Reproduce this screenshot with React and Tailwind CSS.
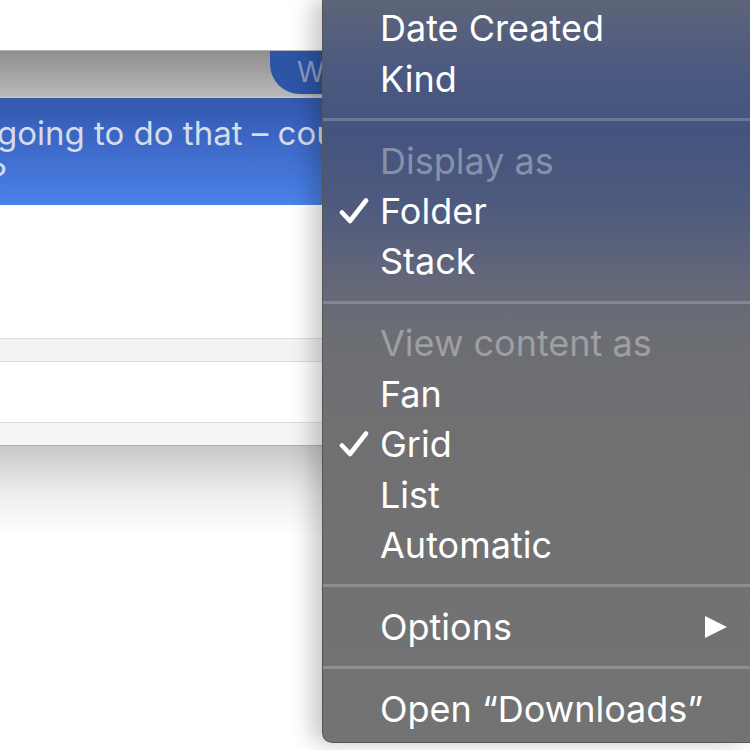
import React from "react";

function Check() {
  return (
    <svg width="30" height="26" viewBox="0 0 30 26" className="block">
      <path d="M3 14.5 L11 23 L27 2.5" fill="none" stroke="white" strokeWidth="4.6" strokeLinecap="round" strokeLinejoin="round" />
    </svg>
  );
}

function Item({ label, checked, disabled, arrow }) {
  return (
    <div className="flex items-center h-[50.4px]">
      <div className="w-[57px] shrink-0 pl-[16px] flex items-center">{checked ? <Check /> : null}</div>
      <div className={"flex-1 whitespace-nowrap " + (disabled ? "text-white/35" : "text-white")}>{label}</div>
      {arrow ? (
        <svg width="24" height="24" viewBox="0 0 24 24" className="mr-[24px] block">
          <polygon points="1,1 23,12 1,23" fill="white" />
        </svg>
      ) : null}
    </div>
  );
}

function Sep() {
  return (
    <div className="h-[31.6px] flex items-center">
      <div className="h-[3px] w-full bg-white/20" />
    </div>
  );
}

export default function App() {
  return (
    <div className="relative w-[750px] h-[750px] overflow-hidden bg-white font-[family-name:Inter,'Noto_Sans',sans-serif]">
      <div className="flex flex-col">
        <div className="h-[50px] bg-white" />
        <div className="h-px bg-[#b5b5b5]" />
        <div className="h-[45px] bg-gradient-to-b from-[#8f8f8f] to-[#b8b8b8] flex pl-[270px]">
          <div className="w-[140px] h-[43px] bg-[#2d55a6] rounded-bl-[30px] pl-[27px] pt-[2px] text-[28px] leading-[38px] text-[#8c9cc3]">W</div>
        </div>
        <div className="h-[2px] bg-[#c2c2c2]" />
        <div className="h-[107px] bg-gradient-to-b from-[#3358ae] to-[#4a82ea] text-[33px] leading-[42px] text-[#d6dcea] pt-[14px]">
          <div className="-ml-[3px] whitespace-nowrap">going to do that – could you</div>
          <div className="-ml-[10px] whitespace-nowrap">?</div>
        </div>
        <div className="h-[133px] bg-white" />
        <div className="h-px bg-[#dcdcdc]" />
        <div className="h-[22px] bg-[#f3f3f3]" />
        <div className="h-px bg-[#dcdcdc]" />
        <div className="h-[60px] bg-white" />
        <div className="h-px bg-[#dcdcdc]" />
        <div className="h-[22px] bg-[#f4f4f4]" />
        <div className="h-px bg-[#b0b0b0]" />
        <div className="h-[90px] bg-gradient-to-b from-[#c8c8c8] via-[#ececec] to-white" />
      </div>

      <div className="absolute left-[322px] top-0 w-[430px] h-[743px] rounded-bl-[10px] border-l border-b border-[#555555] pt-[3px] text-[36px] shadow-[-10px_0_22px_rgba(0,0,0,0.22)] bg-[linear-gradient(180deg,#5e6579_0%,#4b5980_10%,#44547f_18%,#4f5a7e_28%,#60657a_36%,#6b6d74_44%,#707073_55%,#737373_100%)]">
        <Item label="Date Created" />
        <Item label="Kind" />
        <Sep />
        <Item label="Display as" disabled />
        <Item label="Folder" checked />
        <Item label="Stack" />
        <Sep />
        <Item label="View content as" disabled />
        <Item label="Fan" />
        <Item label="Grid" checked />
        <Item label="List" />
        <Item label="Automatic" />
        <Sep />
        <Item label="Options" arrow />
        <Sep />
        <Item label="Open “Downloads”" />
      </div>
    </div>
  );
}
